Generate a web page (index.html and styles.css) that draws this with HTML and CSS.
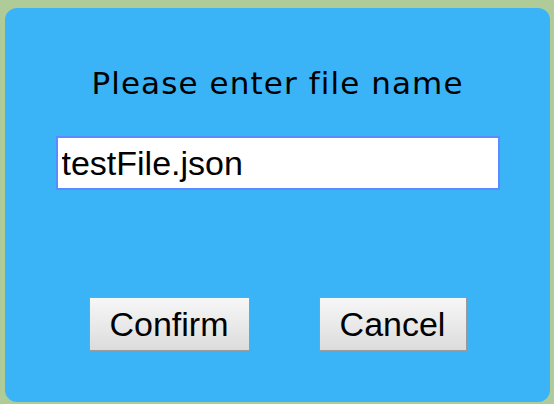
FILE: index.html
```html
<!DOCTYPE html>
<html>
<head>
<meta charset="utf-8">
<link rel="stylesheet" href="styles.css">
</head>
<body>
<div class="dialog">
  <div class="title">Please enter file name</div>
  <input class="name-input" type="text" value="testFile.json">
  <div class="actions">
    <button class="btn btn-confirm">Confirm</button>
    <button class="btn btn-cancel">Cancel</button>
  </div>
</div>
</body>
</html>
```
FILE: styles.css
```css
html, body {
  margin: 0;
  padding: 0;
}
body {
  width: 554px;
  height: 404px;
  background: #aecb98;
  overflow: hidden;
  padding-top: 8px;
  box-sizing: border-box;
}
.dialog {
  margin-left: 5px;
  width: 545px;
  height: 394px;
  background: #3bb3f7;
  border-radius: 12px;
  display: flex;
  flex-direction: column;
  align-items: center;
  box-sizing: border-box;
  padding-top: 57px;
}
.title {
  font-family: "DejaVu Sans", sans-serif;
  font-size: 31px;
  line-height: 36px;
  letter-spacing: 1.1px;
  color: #000;
}
.name-input {
  margin-top: 35px;
  width: 444px;
  height: 54px;
  box-sizing: border-box;
  border: 2px solid #5a8cff;
  background: #fff;
  font-family: "Liberation Sans", Arial, sans-serif;
  font-size: 34px;
  padding: 0 4px;
  color: #000;
  outline: none;
}
.actions {
  margin-top: 107px;
  display: flex;
  gap: 69px;
}
.btn {
  height: 54px;
  box-sizing: border-box;
  border: 1px solid #9a9a9a;
  background: linear-gradient(#f7f7f7, #dcdcdc);
  font-family: "Liberation Sans", Arial, sans-serif;
  font-size: 34px;
  color: #000;
  padding: 0;
}
.btn-confirm { width: 161px; }
.btn-cancel { width: 148px; }
```
